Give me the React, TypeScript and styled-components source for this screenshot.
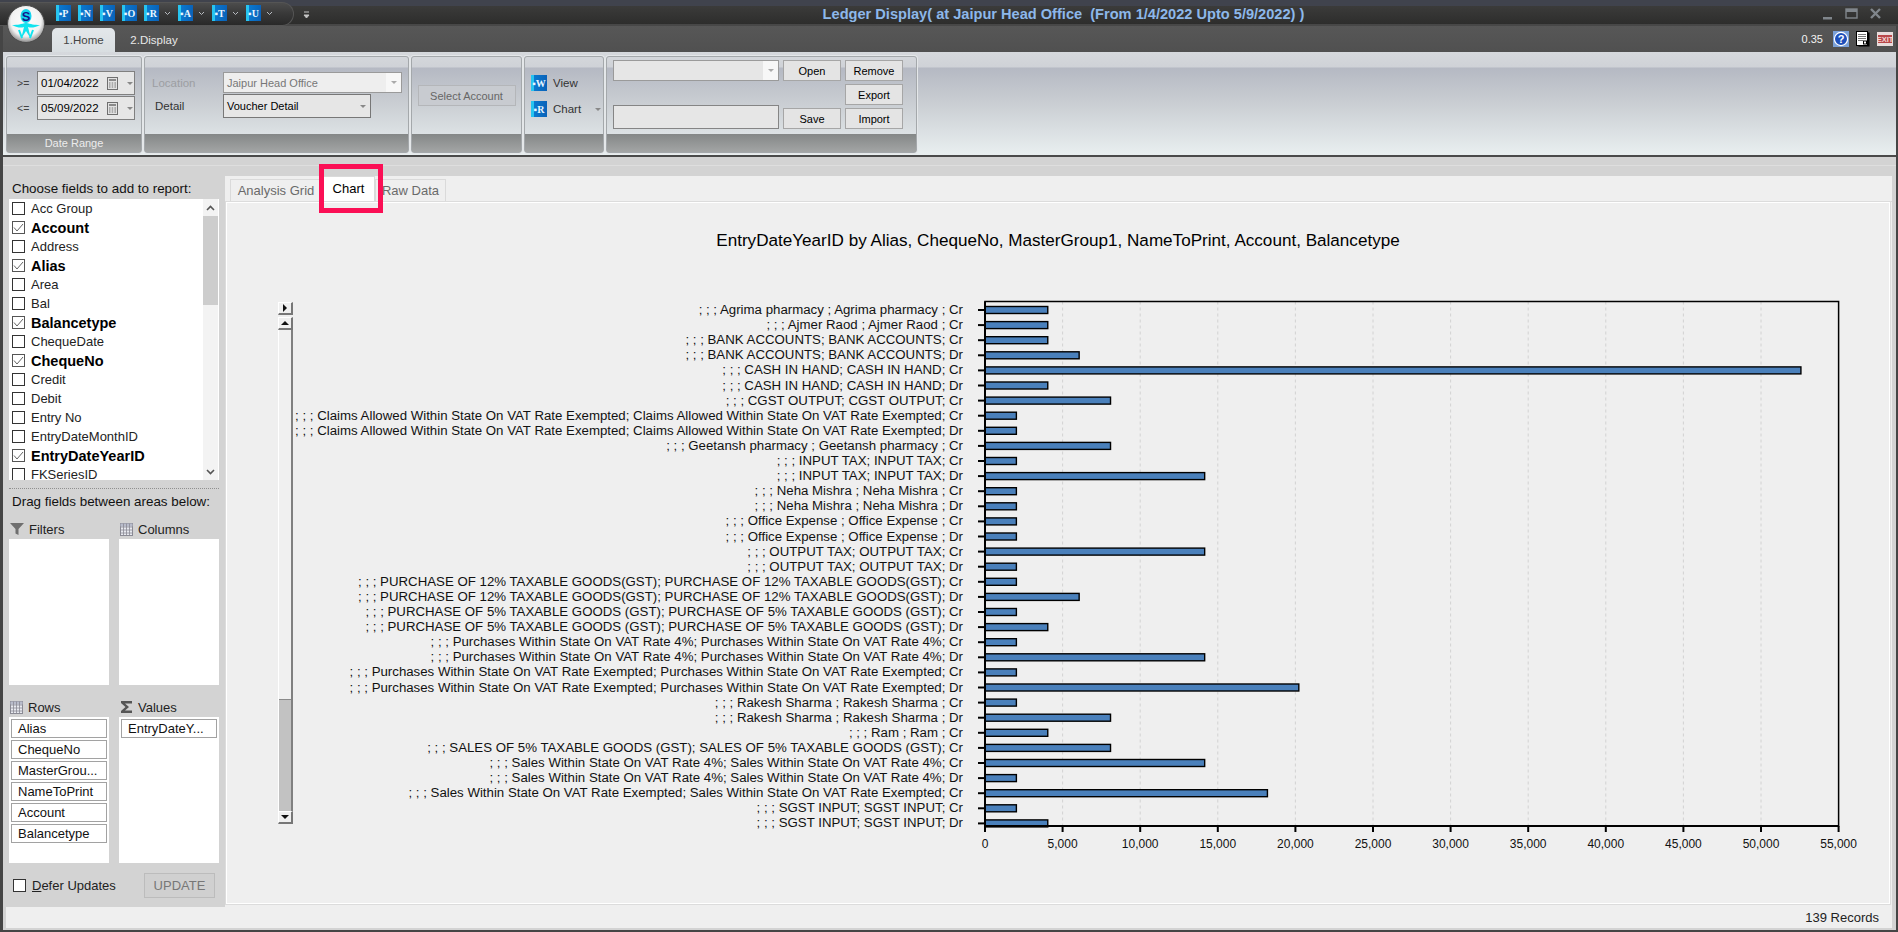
import styled, { createGlobalStyle } from "styled-components";

const GlobalStyle = createGlobalStyle`
  html, body {
    margin: 0;
    padding: 0;
    width: 1898px;
    height: 932px;
    overflow: hidden;
    font-family: "Liberation Sans", Arial, sans-serif;
    background: #d3d3d3;
  }
  * { box-sizing: border-box; }
`;

const Page = styled.div`
  position: relative;
  width: 1898px;
  height: 932px;
  display: flex;
  flex-direction: column;
  overflow: hidden;
`;

/* title bar */
const TitleBar = styled.div`
  height: 26px;
  flex: none;
  display: flex;
  align-items: flex-start;
  background: linear-gradient(180deg, #40434d 0, #40434d 6px, #3b3b3a 6px, #2d2d2c 24px, #474747 24px, #474747 26px);
`;

const QatPill = styled.div`
  width: 294px;
  height: 24px;
  margin-top: 2px;
  flex: none;
  display: flex;
  align-items: center;
  gap: 7px;
  padding: 0 0 2px 56px;
  border-radius: 0 13px 13px 0;
  border: 1px solid #555;
  border-left: 0;
  background: linear-gradient(180deg, #4c4c4c 0, #3a3a3a 45%, #292929 100%);
`;

const QatIcon = styled.span`
  width: 15px;
  height: 16px;
  flex: none;
  display: flex;
  align-items: center;
  justify-content: center;
  font: bold 10px "Liberation Serif", serif;
  color: #e8f6ff;
  background: linear-gradient(90deg, #27c4f0 0, #27c4f0 3px, #0a79cf 3px, #0a62b8 100%);
`;

const QatItem = styled.span`
  display: flex;
  align-items: center;
  gap: 5px;
`;

const QatMore = styled.span`
  margin: 11px 0 0 9px;
  flex: none;
  display: flex;
`;

const WindowTitle = styled.div`
  flex: 1;
  padding: 7px 0 0 3px;
  text-align: center;
  font-size: 14.6px;
  line-height: 15px;
  font-weight: bold;
  color: #8db8ea;
  white-space: pre;
`;

const WindowControls = styled.div`
  width: 84px;
  flex: none;
  display: flex;
  align-items: center;
  gap: 11px;
  padding: 7px 0 0 7px;
`;

const LogoBadge = styled.div`
  position: absolute;
  left: 7px;
  top: 5px;
  width: 38px;
  height: 38px;
`;

/* window frame below the title */
const Frame = styled.div`
  flex: 1;
  min-height: 0;
  display: flex;
  flex-direction: column;
  border-left: 3px solid #454545;
  border-right: 2px solid #454545;
  border-bottom: 2px solid #454545;
`;

const TabRow = styled.div`
  height: 26px;
  flex: none;
  display: flex;
  align-items: flex-end;
  padding-left: 49px;
  background: linear-gradient(180deg, #575757, #505050);
`;

const RibbonTab = styled.div<{ $active?: boolean }>`
  width: ${(p) => (p.$active ? 63 : 78)}px;
  height: 24px;
  display: flex;
  align-items: center;
  justify-content: center;
  font-size: 11.5px;
  border-radius: 5px 5px 0 0;
  color: ${(p) => (p.$active ? "#444" : "#e8e8e8")};
  background: ${(p) => (p.$active ? "linear-gradient(180deg, #e3e7ea, #d9dee1)" : "transparent")};
`;

const RibbonStatus = styled.div`
  margin-left: auto;
  display: flex;
  align-items: center;
  height: 26px;
  gap: 7px;
  padding-right: 3px;
  font-size: 11px;
  color: #f2f2f2;
`;

const RibbonTime = styled.span`
  margin-right: 3px;
`;

const Ribbon = styled.div`
  height: 105px;
  flex: none;
  display: flex;
  gap: 2px;
  padding: 4px 0 0 3px;
  border-bottom: 2px solid #4a4a4a;
  background: linear-gradient(180deg, #d6d9dd 0, #cfd2d7 15px, #b5b9c3 16px, #c9cdd2 50px, #e9eff0 100%);
`;

const RibbonGroup = styled.div<{ $width: number }>`
  width: ${(p) => p.$width}px;
  height: 97px;
  flex: none;
  display: flex;
  flex-direction: column;
  border: 1px solid #a4a8ab;
  border-radius: 3px;
  box-shadow: 0 0 0 1px #e4e7e9;
`;

const GroupBody = styled.div`
  height: 77px;
  flex: none;
`;

const GroupCaption = styled.div`
  flex: 1;
  display: flex;
  align-items: center;
  justify-content: center;
  font-size: 11px;
  color: #ececec;
  background: linear-gradient(180deg, #848787, #a3a5a5);
`;

const DateRows = styled(GroupBody)`
  display: flex;
  flex-direction: column;
  gap: 1px;
  padding: 14px 0 0 10px;
`;

const DateRow = styled.div`
  display: flex;
  align-items: center;
  height: 24px;
`;

const DateSign = styled.span`
  width: 20px;
  font-size: 10.5px;
  color: #444;
`;

const DateBox = styled.div`
  width: 98px;
  height: 24px;
  display: flex;
  align-items: center;
  gap: 8px;
  padding-left: 3px;
  font-size: 11.5px;
  color: #000;
  background: #e6e6e6;
  border: 1px solid #808080;
`;

const LocationGrid = styled(GroupBody)`
  display: grid;
  grid-template-columns: 71px auto;
  grid-template-rows: 21px 24px;
  justify-content: start;
  align-content: start;
  row-gap: 1px;
  padding: 15px 0 0 7px;
`;

const FieldLabel = styled.span<{ $muted?: boolean }>`
  align-self: center;
  font-size: 11.5px;
  padding-left: ${(p) => (p.$muted ? 0 : 3)}px;
  color: ${(p) => (p.$muted ? "#9c9ea2" : "#333")};
`;

const Combo = styled.div<{ $width: number; $muted?: boolean; $dark?: boolean }>`
  width: ${(p) => p.$width}px;
  display: flex;
  align-items: center;
  justify-content: space-between;
  font-size: 11px;
  padding-left: 3px;
  color: ${(p) => (p.$muted ? "#777" : "#000")};
  background: ${(p) => (p.$muted ? "#eeeeee" : "#e6e6e6")};
  border: 1px solid ${(p) => (p.$dark ? "#777" : "#9a9a9a")};
`;

const ComboDrop = styled.span<{ $white?: boolean }>`
  width: 15px;
  align-self: stretch;
  display: flex;
  align-items: center;
  justify-content: center;
  background: ${(p) => (p.$white ? "#f7f7f7" : "transparent")};
`;

const Caret = styled.span<{ $color?: string }>`
  width: 0;
  height: 0;
  flex: none;
  border-left: 3px solid transparent;
  border-right: 3px solid transparent;
  border-top: 3px solid ${(p) => p.$color || "#888"};
`;

const CenteredBody = styled(GroupBody)`
  display: flex;
  justify-content: center;
  padding-top: 28px;
`;

const DisabledButton = styled.div`
  width: 98px;
  height: 21px;
  display: flex;
  align-items: center;
  justify-content: center;
  font-size: 11px;
  color: #666;
  background: #c8cbd0;
  border: 1px solid #b4b6b9;
`;

const ViewList = styled(GroupBody)`
  display: flex;
  flex-direction: column;
  gap: 10px;
  padding: 18px 0 0 6px;
`;

const ViewRow = styled.div`
  display: flex;
  align-items: center;
  gap: 6px;
  height: 16px;
  font-size: 11.5px;
  color: #333;
`;

const ViewIcon = styled(QatIcon)`
  width: 16px;
`;

const ViewCaret = styled(Caret)`
  margin-left: 8px;
`;

const LayoutGrid = styled(GroupBody)`
  display: grid;
  grid-template-columns: 166px 58px 58px;
  grid-template-rows: 21px 21px 21px;
  gap: 3px 4px;
  padding: 3px 0 0 6px;
  justify-content: start;
  align-content: start;
`;

const ActionButton = styled.div<{ $col: number; $row: number }>`
  grid-column: ${(p) => p.$col};
  grid-row: ${(p) => p.$row};
  display: flex;
  align-items: center;
  justify-content: center;
  font-size: 11px;
  color: #000;
  background: #e4e4e4;
  border: 1px solid #a6a6a6;
`;

const LayoutCombo = styled(Combo)`
  grid-column: 1;
  grid-row: 1;
`;

const LayoutInput = styled.div`
  grid-column: 1;
  grid-row: 3;
  height: 24px;
  align-self: end;
  background: #e6e6e6;
  border: 1px solid #858585;
`;

/* main area */
const SubStrip = styled.div`
  height: 9px;
  flex: none;
  background: #d3d3d3;
  border-bottom: 1px solid #dedede;
`;

const Body = styled.div`
  flex: 1;
  min-height: 0;
  display: flex;
  background: #d3d3d3;
`;

const FieldPanel = styled.aside`
  width: 222px;
  flex: none;
  display: flex;
  flex-direction: column;
  padding: 15px 6px 0 6px;
`;

const PanelText = styled.div`
  height: 16px;
  padding-left: 3px;
  font-size: 13.4px;
  line-height: 16px;
  white-space: nowrap;
  color: #111;
`;

const FieldList = styled.div`
  height: 281px;
  margin-top: 2px;
  flex: none;
  display: flex;
  justify-content: space-between;
  overflow: hidden;
  background: #fff;
`;

const FieldRows = styled.div`
  flex: 1;
`;

const FieldRow = styled.div<{ $on?: boolean }>`
  height: 19px;
  display: flex;
  align-items: center;
  gap: 6px;
  padding-left: 3px;
  font-size: ${(p) => (p.$on ? 14.5 : 13)}px;
  font-weight: ${(p) => (p.$on ? "bold" : "normal")};
  color: ${(p) => (p.$on ? "#000" : "#222")};
`;

const Check = styled.span<{ $on?: boolean }>`
  width: 13px;
  height: 13px;
  flex: none;
  display: flex;
  align-items: center;
  justify-content: center;
  background: #fff;
  border: 1px solid ${(p) => (p.$on ? "#555" : "#333")};
`;

const ListScroll = styled.div`
  width: 15px;
  margin-right: 1px;
  flex: none;
  display: flex;
  flex-direction: column;
  background: #f3f3f3;
`;

const ScrollEnd = styled.div`
  height: 17px;
  flex: none;
  display: flex;
  align-items: center;
  justify-content: center;
`;

const ScrollThumb = styled.div`
  height: 89px;
  flex: none;
  background: #cdcdcd;
`;

const ScrollRest = styled.div`
  flex: 1;
`;

const DottedRule = styled.div`
  margin-top: 8px;
  flex: none;
  border-top: 1px dotted #8f8f8f;
`;

const DragHint = styled(PanelText)`
  margin-top: 5px;
`;

const AreaGrid = styled.div`
  margin-top: 11px;
  display: grid;
  grid-template-columns: 100px 100px;
  grid-template-rows: 164px 164px;
  column-gap: 10px;
  row-gap: 14px;
`;

const AreaBlock = styled.div`
  display: flex;
  flex-direction: column;
`;

const AreaHead = styled.div`
  height: 16px;
  display: flex;
  align-items: center;
  gap: 5px;
  padding-left: 1px;
  font-size: 13px;
  color: #222;
`;

const AreaBox = styled.div`
  height: 146px;
  margin-top: 2px;
  display: flex;
  flex-direction: column;
  gap: 2px;
  padding: 2px;
  background: #fff;
`;

const Chip = styled.div`
  height: 19px;
  flex: none;
  padding-left: 6px;
  font-size: 13px;
  line-height: 17px;
  color: #111;
  border: 1px solid #a2a2a2;
`;

const DeferRow = styled.div`
  margin-top: 10px;
  display: flex;
  align-items: center;
  padding: 0 4px 0 4px;
  height: 25px;
`;

const DeferLabel = styled.span`
  margin-left: 6px;
  font-size: 13px;
  color: #222;
`;

const UpdateButton = styled.div`
  margin-left: auto;
  width: 71px;
  height: 25px;
  display: flex;
  align-items: center;
  justify-content: center;
  font-size: 13px;
  color: #777;
  background: #d0d0d0;
  border: 1px solid #bcbcbc;
`;

const ReportPanel = styled.section`
  flex: 1;
  min-width: 0;
  margin-top: 10px;
  margin-right: 4px;
  display: flex;
  flex-direction: column;
  background: #efefef;
`;

const ReportTabs = styled.div`
  height: 26px;
  flex: none;
  display: flex;
  align-items: flex-end;
  padding-left: 5px;
  border-bottom: 1px solid #dadada;
`;

const ReportTab = styled.div<{ $active?: boolean; $width: number }>`
  width: ${(p) => p.$width}px;
  height: ${(p) => (p.$active ? 26 : 22)}px;
  display: flex;
  align-items: ${(p) => (p.$active ? "flex-start" : "center")};
  justify-content: center;
  padding-top: ${(p) => (p.$active ? 4 : 0)}px;
  font-size: 13px;
  color: ${(p) => (p.$active ? "#000" : "#6a6a6a")};
  background: ${(p) => (p.$active ? "#fff" : "transparent")};
  border: 1px solid #dadada;
  border-bottom: 0;
  margin-bottom: ${(p) => (p.$active ? -1 : 0)}px;
`;

const ChartPane = styled.div`
  flex: 1;
  min-height: 0;
  margin: 0 2px 3px 1px;
  display: flex;
  flex-direction: column;
  padding-top: 30px;
  border: 1px solid #fff;
  outline: 1px solid #dcdcdc;
  background: #efefef;
`;

const ChartTitle = styled.div`
  height: 20px;
  flex: none;
  text-align: center;
  font-size: 17.1px;
  line-height: 16px;
  color: #000;
`;

const ChartRow = styled.div`
  margin-top: 42px;
  flex: none;
  display: flex;
  align-items: flex-start;
  padding-left: 51px;
`;

const ChartScroll = styled.div`
  width: 15px;
  height: 522px;
  margin-top: 7px;
  flex: none;
  display: flex;
  flex-direction: column;
  gap: 2px;
`;

const ChartButton = styled.div`
  height: 13px;
  flex: none;
  display: flex;
  align-items: center;
  justify-content: center;
  background: #f0f0f0;
  border-top: 1px solid #fff;
  border-left: 1px solid #fff;
  border-right: 2px solid #777;
  border-bottom: 2px solid #777;
`;

const ChartTrack = styled.div`
  flex: 1;
  display: flex;
  flex-direction: column;
  justify-content: flex-end;
  margin: -2px 0;
  background: #f0f0f0;
  border-left: 1px solid #fff;
  border-right: 2px solid #808080;
`;

const ChartThumb = styled.div`
  height: 112px;
  flex: none;
  background: #c2c2c2;
  border-top: 1px solid #8a8a8a;
`;

const ChartSvg = styled.svg`
  flex: none;
  display: block;
  font-family: "Liberation Sans", Arial, sans-serif;
`;

const StatusHolder = styled.div`
  flex: none;
  padding: 0 4px 2px 3px;
  background: #d3d3d3;
`;

const StatusBar = styled.div`
  height: 21px;
  display: flex;
  align-items: center;
  justify-content: flex-end;
  padding-right: 13px;
  font-size: 13px;
  color: #222;
  background: #efefef;
`;

const Highlight = styled.div`
  position: absolute;
  left: 319px;
  top: 164px;
  width: 64px;
  height: 49px;
  border: 5px solid #fb0f55;
  pointer-events: none;
`;

const fields: [string, boolean][] = [
  ["Acc Group", false],
  ["Account", true],
  ["Address", false],
  ["Alias", true],
  ["Area", false],
  ["Bal", false],
  ["Balancetype", true],
  ["ChequeDate", false],
  ["ChequeNo", true],
  ["Credit", false],
  ["Debit", false],
  ["Entry No", false],
  ["EntryDateMonthID", false],
  ["EntryDateYearID", true],
  ["FKSeriesID", false],
];

const rowChips = ["Alias", "ChequeNo", "MasterGrou...", "NameToPrint", "Account", "Balancetype"];

// value = 2022 x count of entries
const bars: [string, number][] = [
  ["; ; ; Agrima pharmacy ; Agrima pharmacy ; Cr", 2],
  ["; ; ; Ajmer Raod ; Ajmer Raod ; Cr", 2],
  ["; ; ; BANK ACCOUNTS; BANK ACCOUNTS; Cr", 2],
  ["; ; ; BANK ACCOUNTS; BANK ACCOUNTS; Dr", 3],
  ["; ; ; CASH IN HAND; CASH IN HAND; Cr", 26],
  ["; ; ; CASH IN HAND; CASH IN HAND; Dr", 2],
  ["; ; ; CGST OUTPUT; CGST OUTPUT; Cr", 4],
  ["; ; ; Claims Allowed Within State On VAT Rate Exempted; Claims Allowed Within State On VAT Rate Exempted; Cr", 1],
  ["; ; ; Claims Allowed Within State On VAT Rate Exempted; Claims Allowed Within State On VAT Rate Exempted; Dr", 1],
  ["; ; ; Geetansh pharmacy ; Geetansh pharmacy ; Cr", 4],
  ["; ; ; INPUT TAX; INPUT TAX; Cr", 1],
  ["; ; ; INPUT TAX; INPUT TAX; Dr", 7],
  ["; ; ; Neha Mishra ; Neha Mishra ; Cr", 1],
  ["; ; ; Neha Mishra ; Neha Mishra ; Dr", 1],
  ["; ; ; Office Expense ; Office Expense ; Cr", 1],
  ["; ; ; Office Expense ; Office Expense ; Dr", 1],
  ["; ; ; OUTPUT TAX; OUTPUT TAX; Cr", 7],
  ["; ; ; OUTPUT TAX; OUTPUT TAX; Dr", 1],
  ["; ; ; PURCHASE OF 12% TAXABLE GOODS(GST); PURCHASE OF 12% TAXABLE GOODS(GST); Cr", 1],
  ["; ; ; PURCHASE OF 12% TAXABLE GOODS(GST); PURCHASE OF 12% TAXABLE GOODS(GST); Dr", 3],
  ["; ; ; PURCHASE OF 5% TAXABLE GOODS (GST); PURCHASE OF 5% TAXABLE GOODS (GST); Cr", 1],
  ["; ; ; PURCHASE OF 5% TAXABLE GOODS (GST); PURCHASE OF 5% TAXABLE GOODS (GST); Dr", 2],
  ["; ; ; Purchases Within State On VAT Rate 4%; Purchases Within State On VAT Rate 4%; Cr", 1],
  ["; ; ; Purchases Within State On VAT Rate 4%; Purchases Within State On VAT Rate 4%; Dr", 7],
  ["; ; ; Purchases Within State On VAT Rate Exempted; Purchases Within State On VAT Rate Exempted; Cr", 1],
  ["; ; ; Purchases Within State On VAT Rate Exempted; Purchases Within State On VAT Rate Exempted; Dr", 10],
  ["; ; ; Rakesh Sharma ; Rakesh Sharma ; Cr", 1],
  ["; ; ; Rakesh Sharma ; Rakesh Sharma ; Dr", 4],
  ["; ; ; Ram ; Ram ; Cr", 2],
  ["; ; ; SALES OF 5% TAXABLE GOODS (GST); SALES OF 5% TAXABLE GOODS (GST); Cr", 4],
  ["; ; ; Sales Within State On VAT Rate 4%; Sales Within State On VAT Rate 4%; Cr", 7],
  ["; ; ; Sales Within State On VAT Rate 4%; Sales Within State On VAT Rate 4%; Dr", 1],
  ["; ; ; Sales Within State On VAT Rate Exempted; Sales Within State On VAT Rate Exempted; Cr", 9],
  ["; ; ; SGST INPUT; SGST INPUT; Cr", 1],
  ["; ; ; SGST INPUT; SGST INPUT; Dr", 2],
];

const ticks = Array.from({ length: 12 }, (_, i) => i * 5000);

const Logo = () => (
  <svg width="38" height="38" viewBox="0 0 38 38">
    <defs>
      <radialGradient id="logoBg" cx="50%" cy="42%" r="60%">
        <stop offset="0%" stopColor="#ffffff" />
        <stop offset="68%" stopColor="#f2f2f2" />
        <stop offset="100%" stopColor="#7d7d7d" />
      </radialGradient>
    </defs>
    <circle cx="19" cy="19" r="18.5" fill="url(#logoBg)" stroke="#4d4d4d" />
    <ellipse cx="19" cy="11" rx="5.5" ry="7" fill="#16d4ee" />
    <text x="19" y="15.5" textAnchor="middle" fontSize="13" fontWeight="bold" fill="#14148c" fontFamily="Liberation Sans">S</text>
    <path d="M5 20 C11 20 14 19 19 18 C24 19 27 20 33 20 C27 23 24 23 21 22 L24 34 L19 26 L14 34 L17 22 C14 23 11 23 5 20 Z" fill="#10e3ee" />
    <path d="M12 25 L15 33 M26 25 L23 33" stroke="#10e3ee" strokeWidth="2" />
  </svg>
);

const SmallChevron = () => (
  <svg width="7" height="5" viewBox="0 0 7 5">
    <path d="M1 1 L3.5 3.5 L6 1" fill="none" stroke="#b8bcc2" strokeWidth="1" />
  </svg>
);

const MoreGlyph = () => (
  <svg width="7" height="9" viewBox="0 0 7 9">
    <path d="M1 1 H6 M1 4 L3.5 7 L6 4 Z" fill="#c4c4c4" stroke="#c4c4c4" strokeWidth="1" />
  </svg>
);

const MinGlyph = () => (
  <svg width="13" height="13" viewBox="0 0 13 13">
    <rect x="2" y="10" width="9" height="2.5" fill="#80868c" />
  </svg>
);

const MaxGlyph = () => (
  <svg width="13" height="13" viewBox="0 0 13 13">
    <rect x="1" y="2" width="11" height="9" fill="none" stroke="#80868c" strokeWidth="1.4" />
    <rect x="1" y="2" width="11" height="3" fill="#80868c" />
  </svg>
);

const CloseGlyph = () => (
  <svg width="13" height="13" viewBox="0 0 13 13">
    <path d="M2 2 L11 11 M11 2 L2 11" stroke="#80868c" strokeWidth="2.4" />
  </svg>
);

const HelpIcon = () => (
  <svg width="16" height="16" viewBox="0 0 16 16">
    <rect width="16" height="16" fill="#7aa0d8" />
    <circle cx="8" cy="8" r="6.6" fill="#1d4fbb" stroke="#fff" strokeWidth="1.2" />
    <text x="8" y="12" textAnchor="middle" fontSize="11" fontWeight="bold" fill="#fff" fontFamily="Liberation Sans">?</text>
  </svg>
);

const DocIcon = () => (
  <svg width="14" height="16" viewBox="0 0 14 16">
    <rect x="2.5" y="1.5" width="11" height="14" fill="#000" />
    <rect x="0.5" y="0.5" width="11" height="14" fill="#fff" stroke="#000" />
    <path d="M2 3.5 H10 M2 5.5 H10 M2 7.5 H10 M2 9.5 H7" stroke="#777" />
    <rect x="7.5" y="10" width="3" height="3" fill="#fff" stroke="#000" />
  </svg>
);

const ExitIcon = () => (
  <svg width="16" height="14" viewBox="0 0 16 14">
    <rect width="16" height="14" fill="#e8dcdc" />
    <rect x="1" y="3" width="14" height="8" fill="#b9474a" />
    <text x="8" y="10" textAnchor="middle" fontSize="7.5" fontWeight="bold" fill="#f2d6d6" fontFamily="Liberation Sans">EXIT</text>
  </svg>
);

const CalendarIcon = () => (
  <svg width="12" height="13" viewBox="0 0 12 13">
    <rect x="0.5" y="0.5" width="10" height="12" fill="#e2e2e2" stroke="#6f6f6f" />
    <rect x="2" y="2" width="7" height="2" fill="#8a8a8a" />
    <path d="M2 6 H3.5 M4.7 6 H6.2 M7.4 6 H9 M2 8 H3.5 M4.7 8 H6.2 M7.4 8 H9 M2 10 H3.5 M4.7 10 H6.2 M7.4 10 H9" stroke="#777" />
  </svg>
);

const TickMark = () => (
  <svg width="11" height="9" viewBox="0 0 11 9">
    <path d="M1 4.5 L4 8 L10 1" fill="none" stroke="#666" strokeWidth="1" />
  </svg>
);

const UpGlyph = ({ down }: { down?: boolean }) => (
  <svg width="9" height="6" viewBox="0 0 9 6">
    <path d={down ? "M1 1 L4.5 4.5 L8 1" : "M1 5 L4.5 1.5 L8 5"} fill="none" stroke="#555" strokeWidth="1.6" />
  </svg>
);

const FilterIcon = () => (
  <svg width="14" height="14" viewBox="0 0 14 14">
    <path d="M0 1 H14 L8.5 7 V13 L5.5 11.5 V7 Z" fill="#6f6f6f" />
  </svg>
);

const GridIcon = () => (
  <svg width="13" height="13" viewBox="0 0 13 13">
    <rect x="0.5" y="0.5" width="12" height="12" fill="#e8eaf0" stroke="#8a8a94" />
    <rect x="0.5" y="0.5" width="12" height="3" fill="#b8bccb" />
    <path d="M0.5 4 H12.5 M0.5 7 H12.5 M0.5 10 H12.5 M3.5 0.5 V12.5 M6.5 0.5 V12.5 M9.5 0.5 V12.5" stroke="#8a8a94" strokeWidth="0.8" />
  </svg>
);

const SigmaIcon = () => (
  <svg width="13" height="14" viewBox="0 0 13 14">
    <path d="M1 1 H12 V3.5 H5 L9 7 L5 10.5 H12 V13 H1 V11 L5.5 7 L1 3 Z" fill="#555" />
  </svg>
);

const SideArrow = ({ dir }: { dir: "right" | "up" | "down" }) => {
  const d = dir === "right" ? "M2 0 L6 4 L2 8 Z" : dir === "up" ? "M0 6 L4 2 L8 6 Z" : "M0 2 L8 2 L4 6 Z";
  return (
    <svg width="8" height="8" viewBox="0 0 8 8">
      <path d={d} fill="#111" />
    </svg>
  );
};

// the drawing uses page coordinates so it lines up with the axis positions read off the app
const X0 = 985;
const PER = 77.6 / 5000;
const Y_TOP = 301.5;
const Y_AXIS = 826;

const BarChart = () => (
  <ChartSvg width="1596" height="570" viewBox="293 295 1596 570">
    {ticks.slice(1, -1).map((t) => (
      <line key={t} x1={X0 + t * PER} x2={X0 + t * PER} y1={Y_TOP} y2={Y_AXIS} stroke="#d2d2d2" strokeDasharray="3 3" />
    ))}
    {bars.map(([label, count], i) => {
      const y = 310 + i * 15.1;
      return (
        <g key={label}>
          <text x="963" y={y + 4} textAnchor="end" fontSize="13.25" fill="#111">
            {label}
          </text>
          <line x1="978" x2={X0} y1={y} y2={y} stroke="#000" strokeWidth="2" />
          <rect x={X0} y={y - 3.5} width={count * 2022 * PER} height="7" fill="#4a80bb" stroke="#000" strokeWidth="1.4" />
        </g>
      );
    })}
    <rect x={X0} y={Y_TOP} width={55000 * PER} height={Y_AXIS - Y_TOP} fill="none" stroke="#000" strokeWidth="1.5" />
    <line x1={X0} x2={X0} y1={Y_TOP} y2={Y_AXIS} stroke="#000" strokeWidth="2" />
    <line x1={X0} x2={X0 + 55000 * PER} y1={Y_AXIS} y2={Y_AXIS} stroke="#000" strokeWidth="2" />
    {ticks.map((t) => (
      <g key={t}>
        <line x1={X0 + t * PER} x2={X0 + t * PER} y1={Y_AXIS} y2={832} stroke="#000" strokeWidth="2" />
        <text x={X0 + t * PER} y="848" textAnchor="middle" fontSize="12" fill="#111">
          {t.toLocaleString("en-US")}
        </text>
      </g>
    ))}
  </ChartSvg>
);

export default function App() {
  return (
    <Page>
      <GlobalStyle />
      <TitleBar>
        <QatPill>
          {["P", "N", "V", "O"].map((k) => (
            <QatIcon key={k}>▪{k}</QatIcon>
          ))}
          {["R", "A", "T", "U"].map((k) => (
            <QatItem key={k}>
              <QatIcon>▪{k}</QatIcon>
              <SmallChevron />
            </QatItem>
          ))}
        </QatPill>
        <QatMore>
          <MoreGlyph />
        </QatMore>
        <WindowTitle>Ledger Display( at Jaipur Head Office  (From 1/4/2022 Upto 5/9/2022) )</WindowTitle>
        <WindowControls>
          <MinGlyph />
          <MaxGlyph />
          <CloseGlyph />
        </WindowControls>
      </TitleBar>
      <Frame>
        <TabRow>
          <RibbonTab $active>1.Home</RibbonTab>
          <RibbonTab>2.Display</RibbonTab>
          <RibbonStatus>
            <RibbonTime>0.35</RibbonTime>
            <HelpIcon />
            <DocIcon />
            <ExitIcon />
          </RibbonStatus>
        </TabRow>
        <Ribbon>
          <RibbonGroup $width={136}>
            <DateRows>
              <DateRow>
                <DateSign>&gt;=</DateSign>
                <DateBox>
                  01/04/2022
                  <CalendarIcon />
                  <Caret />
                </DateBox>
              </DateRow>
              <DateRow>
                <DateSign>&lt;=</DateSign>
                <DateBox>
                  05/09/2022
                  <CalendarIcon />
                  <Caret />
                </DateBox>
              </DateRow>
            </DateRows>
            <GroupCaption>Date Range</GroupCaption>
          </RibbonGroup>
          <RibbonGroup $width={265}>
            <LocationGrid>
              <FieldLabel $muted>Location</FieldLabel>
              <Combo $width={179} $muted>
                Jaipur Head Office
                <ComboDrop $white>
                  <Caret $color="#aaa" />
                </ComboDrop>
              </Combo>
              <FieldLabel>Detail</FieldLabel>
              <Combo $width={148} $dark>
                Voucher Detail
                <ComboDrop>
                  <Caret />
                </ComboDrop>
              </Combo>
            </LocationGrid>
            <GroupCaption />
          </RibbonGroup>
          <RibbonGroup $width={111}>
            <CenteredBody>
              <DisabledButton>Select Account</DisabledButton>
            </CenteredBody>
            <GroupCaption />
          </RibbonGroup>
          <RibbonGroup $width={80}>
            <ViewList>
              <ViewRow>
                <ViewIcon>▪W</ViewIcon>
                View
              </ViewRow>
              <ViewRow>
                <ViewIcon>▪R</ViewIcon>
                Chart
                <ViewCaret />
              </ViewRow>
            </ViewList>
            <GroupCaption />
          </RibbonGroup>
          <RibbonGroup $width={311}>
            <LayoutGrid>
              <LayoutCombo $width={166}>
                <span />
                <ComboDrop $white>
                  <Caret $color="#aaa" />
                </ComboDrop>
              </LayoutCombo>
              <ActionButton $col={2} $row={1}>Open</ActionButton>
              <ActionButton $col={3} $row={1}>Remove</ActionButton>
              <ActionButton $col={3} $row={2}>Export</ActionButton>
              <LayoutInput />
              <ActionButton $col={2} $row={3}>Save</ActionButton>
              <ActionButton $col={3} $row={3}>Import</ActionButton>
            </LayoutGrid>
            <GroupCaption />
          </RibbonGroup>
        </Ribbon>
        <SubStrip />
        <Body>
          <FieldPanel>
            <PanelText>Choose fields to add to report:</PanelText>
            <FieldList>
              <FieldRows>
                {fields.map(([name, on]) => (
                  <FieldRow key={name} $on={on}>
                    <Check $on={on}>{on && <TickMark />}</Check>
                    {name}
                  </FieldRow>
                ))}
              </FieldRows>
              <ListScroll>
                <ScrollEnd>
                  <UpGlyph />
                </ScrollEnd>
                <ScrollThumb />
                <ScrollRest />
                <ScrollEnd>
                  <UpGlyph down />
                </ScrollEnd>
              </ListScroll>
            </FieldList>
            <DottedRule />
            <DragHint>Drag fields between areas below:</DragHint>
            <AreaGrid>
              <AreaBlock>
                <AreaHead>
                  <FilterIcon />
                  Filters
                </AreaHead>
                <AreaBox />
              </AreaBlock>
              <AreaBlock>
                <AreaHead>
                  <GridIcon />
                  Columns
                </AreaHead>
                <AreaBox />
              </AreaBlock>
              <AreaBlock>
                <AreaHead>
                  <GridIcon />
                  Rows
                </AreaHead>
                <AreaBox>
                  {rowChips.map((c) => (
                    <Chip key={c}>{c}</Chip>
                  ))}
                </AreaBox>
              </AreaBlock>
              <AreaBlock>
                <AreaHead>
                  <SigmaIcon />
                  Values
                </AreaHead>
                <AreaBox>
                  <Chip>EntryDateY...</Chip>
                </AreaBox>
              </AreaBlock>
            </AreaGrid>
            <DeferRow>
              <Check />
              <DeferLabel>
                <u>D</u>efer Updates
              </DeferLabel>
              <UpdateButton>UPDATE</UpdateButton>
            </DeferRow>
          </FieldPanel>
          <ReportPanel>
            <ReportTabs>
              <ReportTab $width={92}>Analysis Grid</ReportTab>
              <ReportTab $width={53} $active>Chart</ReportTab>
              <ReportTab $width={71}>Raw Data</ReportTab>
            </ReportTabs>
            <ChartPane>
              <ChartTitle>EntryDateYearID by Alias, ChequeNo, MasterGroup1, NameToPrint, Account, Balancetype</ChartTitle>
              <ChartRow>
                <ChartScroll>
                  <ChartButton>
                    <SideArrow dir="right" />
                  </ChartButton>
                  <ChartButton>
                    <SideArrow dir="up" />
                  </ChartButton>
                  <ChartTrack>
                    <ChartThumb />
                  </ChartTrack>
                  <ChartButton>
                    <SideArrow dir="down" />
                  </ChartButton>
                </ChartScroll>
                <BarChart />
              </ChartRow>
            </ChartPane>
          </ReportPanel>
        </Body>
        <StatusHolder>
          <StatusBar>139 Records</StatusBar>
        </StatusHolder>
      </Frame>
      <LogoBadge>
        <Logo />
      </LogoBadge>
      <Highlight />
    </Page>
  );
}
